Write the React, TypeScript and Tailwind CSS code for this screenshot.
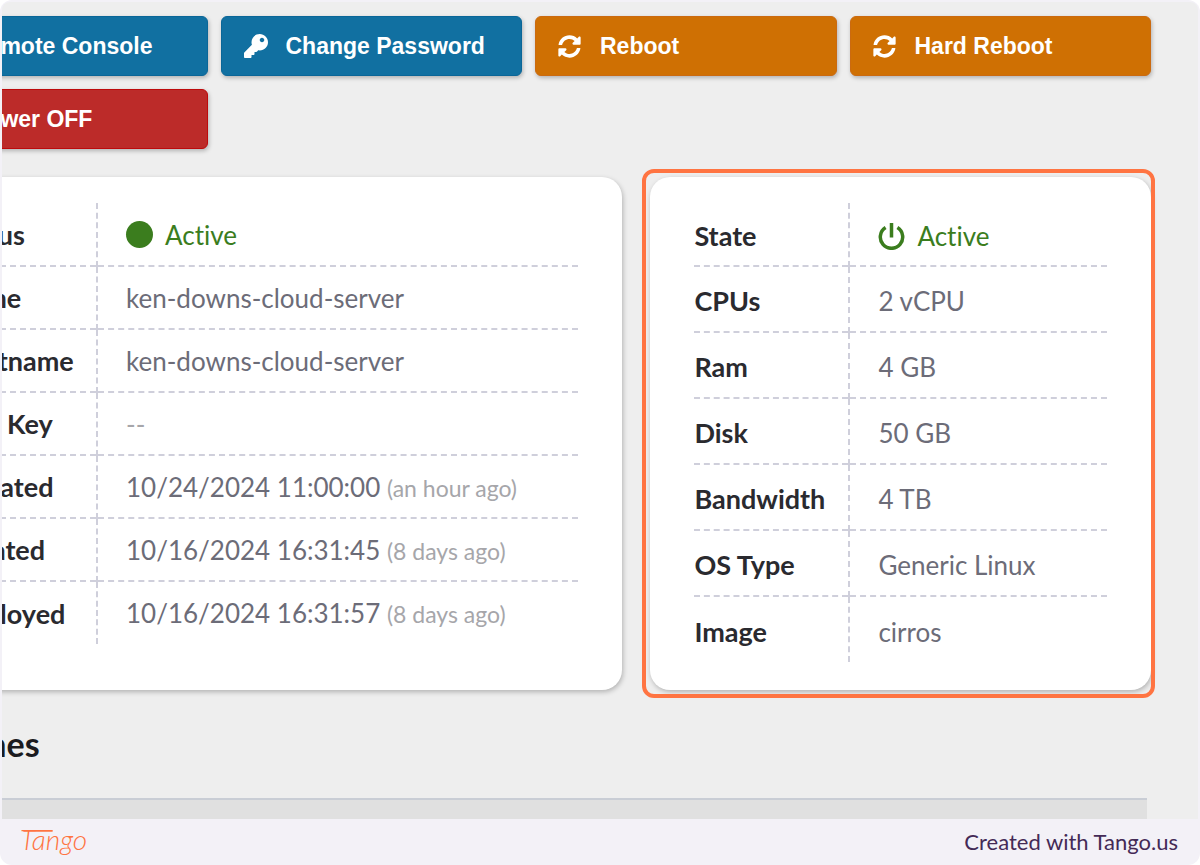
import type { ReactNode } from 'react'
import { FaKey, FaPowerOff, FaSyncAlt, FaTerminal } from 'react-icons/fa'

interface ActionButtonProps {
  icon: ReactNode
  label: string
  tone: 'blue' | 'orange' | 'red'
}

const tones = {
  blue: 'border-[#0a6698] bg-[#1170a1]',
  orange: 'border-[#cb6a10] bg-[#cf7003]',
  red: 'border-[#bd0a0c] bg-[#bc2b29]',
}

function ActionButton({ icon, label, tone }: ActionButtonProps) {
  return (
    <button
      type="button"
      className={`flex h-[60px] items-center rounded-md border px-5 font-['Liberation_Sans',sans-serif] text-[23px] font-bold text-white shadow-[1px_2px_4px_rgba(0,0,0,0.25)] ${tones[tone]}`}
    >
      <span className="flex w-11 shrink-0 items-center pl-0.5">{icon}</span>
      <span className="whitespace-nowrap">{label}</span>
    </button>
  )
}

function PowerIcon() {
  return (
    <svg viewBox="0 0 27 27" className="size-[27px]" fill="none" stroke="currentColor" strokeWidth="3.5" aria-hidden="true">
      <path d="M7.6 4.6 A11.2 11.2 0 1 0 19.4 4.6" />
      <path d="M13.5 0 V14.5" />
    </svg>
  )
}

interface Row {
  label: string
  value: ReactNode
}

const Ago = ({ children }: { children: ReactNode }) => (
  <span className="text-[23px] text-[#a6a6aa]">({children})</span>
)

const serverRows: Row[] = [
  {
    label: 'Status',
    value: (
      <span className="flex items-center gap-3 text-[#3b7d1e]">
        <span className="size-[27px] rounded-full bg-[#3b7d1e]" />
        Active
      </span>
    ),
  },
  { label: 'Name', value: 'ken-downs-cloud-server' },
  { label: 'Hostname', value: 'ken-downs-cloud-server' },
  { label: 'SSH Key', value: <span className="text-[#a6a6aa]">--</span> },
  { label: 'Updated', value: <>10/24/2024 11:00:00 <Ago>an hour ago</Ago></> },
  { label: 'Created', value: <>10/16/2024 16:31:45 <Ago>8 days ago</Ago></> },
  { label: 'Deployed', value: <>10/16/2024 16:31:57 <Ago>8 days ago</Ago></> },
]

const specRows: Row[] = [
  {
    label: 'State',
    value: (
      <span className="flex items-center gap-3 text-[#3b7d1e]">
        <PowerIcon />
        Active
      </span>
    ),
  },
  { label: 'CPUs', value: '2 vCPU' },
  { label: 'Ram', value: '4 GB' },
  { label: 'Disk', value: '50 GB' },
  { label: 'Bandwidth', value: '4 TB' },
  { label: 'OS Type', value: 'Generic Linux' },
  { label: 'Image', value: 'cirros' },
]

interface InfoTableProps {
  rows: Row[]
  labelWidth: string
  rowClass: string
  cellClass: string
}

function InfoTable({ rows, labelWidth, rowClass, cellClass }: InfoTableProps) {
  return (
    <table className="w-full table-fixed border-collapse text-left text-[26px] leading-8 [font-variant-ligatures:none]">
      <tbody>
        {rows.map((row) => (
          <tr key={row.label} className={`border-b-2 border-dashed border-[#cfcfdb] last:border-b-0 ${rowClass}`}>
            <th
              scope="row"
              className={`border-r-2 border-dashed border-[#cfcfdb] text-[27px] font-bold whitespace-nowrap text-[#2a2a2f] ${labelWidth} ${cellClass}`}
            >
              {row.label}
            </th>
            <td className={`pl-7 whitespace-nowrap text-[#6c6c78] ${cellClass}`}>{row.value}</td>
          </tr>
        ))}
      </tbody>
    </table>
  )
}

const card = 'rounded-[20px] bg-white px-11 pt-[26px] pb-7 shadow-[1px_2px_5px_rgba(0,0,0,0.25)]'

function TangoLogo() {
  return (
    <svg viewBox="0 0 72 36" className="h-9 w-[72px]" role="img" aria-label="Tango">
      <text x="0" y="26" className="fill-[#ff7442] font-['Lato',sans-serif] text-[28px] font-light italic">
        Tango
      </text>
      <path d="M4 6.8 H32" fill="none" stroke="#ff7442" strokeWidth="1.8" strokeLinecap="round" />
    </svg>
  )
}

export default function App() {
  return (
    <div className="min-h-screen bg-white font-['Lato',sans-serif]">
      <div className="flex min-h-screen flex-col overflow-hidden rounded-xl bg-[#f3f1f7] px-0.5 pt-0.5">
        <main className="flex grow flex-col overflow-hidden rounded-t-lg bg-[#eeeeee]">
          <div className="-ml-24 flex grow flex-col pt-3.5">
            <div className="mr-[47px] grid grid-cols-4 gap-[13px]">
              <ActionButton tone="blue" icon={<FaTerminal />} label="Remote Console" />
              <ActionButton tone="blue" icon={<FaKey className="size-6" />} label="Change Password" />
              <ActionButton tone="orange" icon={<FaSyncAlt />} label="Reboot" />
              <ActionButton tone="orange" icon={<FaSyncAlt />} label="Hard Reboot" />
              <ActionButton tone="red" icon={<FaPowerOff />} label="Power OFF" />
            </div>

            <div className="mt-7 mr-[47px] grid grid-cols-[717fr_501fr] gap-7">
              <section className={card}>
                <InfoTable rows={serverRows} labelWidth="w-[147px]" rowClass="h-[63px]" cellClass="pt-px" />
              </section>
              <section className={`relative ${card}`}>
                <InfoTable
                  rows={specRows}
                  labelWidth="w-[155px]"
                  rowClass="h-[66px] first:h-[63px]"
                  cellClass="pt-1"
                />
                {/* highlight frame */}
                <div className="pointer-events-none absolute -top-2 -right-1 -bottom-2 -left-2 rounded-xl border-4 border-[#ff7442]" />
              </section>
            </div>

            <h2 className="mt-8 pl-1 text-[34px] leading-[44px] font-bold text-[#1b1b20]">Volumes</h2>
            <div className="mt-8 mr-[51px] min-h-5 grow border-t-2 border-[#c9cdd5] bg-[#e0e0e0]" />
          </div>
        </main>

        <footer className="flex h-[46px] items-center justify-between pr-5 pl-[18px]">
          <TangoLogo />
          <p className="text-[22px] leading-8 text-[#442a56]">Created with Tango.us</p>
        </footer>
      </div>
    </div>
  )
}
